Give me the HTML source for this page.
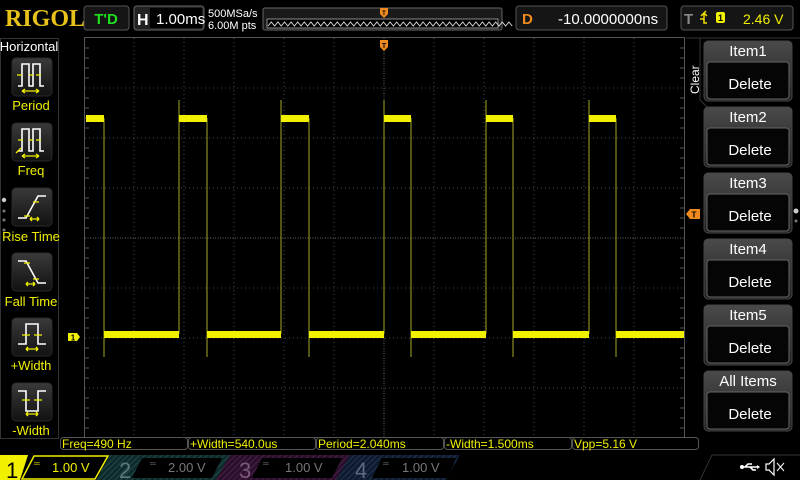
<!DOCTYPE html>
<html><head><meta charset="utf-8"><style>
html,body{margin:0;padding:0;background:#000;width:800px;height:480px;overflow:hidden}
svg{display:block}
text{font-family:"Liberation Sans",sans-serif}
text.serif{font-family:"Liberation Serif",serif}
</style></head><body>
<svg width="800" height="480" viewBox="0 0 800 480" xmlns="http://www.w3.org/2000/svg">
<defs>
<linearGradient id="btn" x1="0" y1="0" x2="0" y2="1"><stop offset="0" stop-color="#3a3a3a"/><stop offset="1" stop-color="#111"/></linearGradient>
<linearGradient id="hdr" x1="0" y1="0" x2="0" y2="1"><stop offset="0" stop-color="#4a4a4a"/><stop offset="1" stop-color="#222"/></linearGradient>
<pattern id="g2" width="4" height="4" patternUnits="userSpaceOnUse" patternTransform="rotate(45)"><rect width="4" height="4" fill="#0f2a2a"/><rect width="1" height="4" fill="#1f4a48"/></pattern>
<pattern id="g3" width="4" height="4" patternUnits="userSpaceOnUse" patternTransform="rotate(45)"><rect width="4" height="4" fill="#2a0f2a"/><rect width="1" height="4" fill="#4a1f4a"/></pattern>
<pattern id="g4" width="4" height="4" patternUnits="userSpaceOnUse" patternTransform="rotate(45)"><rect width="4" height="4" fill="#0f1a2e"/><rect width="1" height="4" fill="#1f3350"/></pattern>
</defs>
<!-- top bar -->
<text class="serif" x="5" y="26" font-weight="bold" font-size="24" fill="#e8c21a">RIGOL</text>
<rect x="84" y="6" width="45" height="24" rx="3" fill="#151515" stroke="#555"/>
<text x="106" y="24" text-anchor="middle" font-weight="bold" font-size="15" fill="#1ee01e">T'D</text>
<rect x="134" y="6" width="70" height="24" rx="3" fill="#222" stroke="#666"/>
<rect x="150" y="8" width="52" height="20" fill="#000"/>
<text x="137" y="25" font-weight="bold" font-size="16" fill="#fff">H</text>
<text x="156" y="24" font-size="15" fill="#fff">1.00ms</text>
<text x="208" y="17" font-size="11" fill="#fff">500MSa/s</text>
<text x="208" y="29" font-size="11" fill="#fff">6.00M pts</text>
<rect x="263" y="8" width="239" height="22" rx="2" fill="#1a1a1a" stroke="#666"/>
<rect x="267" y="19" width="231" height="9" fill="#000" stroke="#aaa" stroke-width="0.8"/>
<path d="M268 26 l3.3 -4 l3.3 4 l3.3 -4 l3.3 4 l3.3 -4 l3.3 4 l3.3 -4 l3.3 4 l3.3 -4 l3.3 4 l3.3 -4 l3.3 4 l3.3 -4 l3.3 4 l3.3 -4 l3.3 4 l3.3 -4 l3.3 4 l3.3 -4 l3.3 4 l3.3 -4 l3.3 4 l3.3 -4 l3.3 4 l3.3 -4 l3.3 4 l3.3 -4 l3.3 4 l3.3 -4 l3.3 4 l3.3 -4 l3.3 4 l3.3 -4 l3.3 4 l3.3 -4 l3.3 4 l3.3 -4 l3.3 4 l3.3 -4 l3.3 4 l3.3 -4 l3.3 4 l3.3 -4 l3.3 4 l3.3 -4 l3.3 4 l3.3 -4 l3.3 4 l3.3 -4 l3.3 4 l3.3 -4 l3.3 4 l3.3 -4 l3.3 4 l3.3 -4 l3.3 4 l3.3 -4 l3.3 4 l3.3 -4 l3.3 4 l3.3 -4 l3.3 4 l3.3 -4 l3.3 4 l3.3 -4 l3.3 4 l3.3 -4 l3.3 4 l3.3 -4 l3.3 4 l3.3 -4 l3.3 4 l3.3 -4 l3.3 4" fill="none" stroke="#ddd" stroke-width="0.9"/>
<path d="M380 8 h8 v6 l-4 4 l-4 -4z" fill="#f08a1e"/>
<text x="384" y="15" text-anchor="middle" font-size="6" fill="#000" font-weight="bold">T</text>
<rect x="516" y="6" width="151" height="24" rx="3" fill="#151515" stroke="#555"/>
<text x="522" y="24" font-weight="bold" font-size="15" fill="#f08a1e">D</text>
<text x="558" y="24" font-size="15" fill="#fff">-10.0000000ns</text>
<rect x="681" y="6" width="112" height="24" rx="3" fill="#151515" stroke="#555"/>
<text x="684" y="24" font-weight="bold" font-size="15" fill="#888">T</text>
<path d="M700 19 h4 v-6 l2 -2 M704 13 l-3 3 M704 13 l3 3 M704 19 v4 h3" fill="none" stroke="#f0e000" stroke-width="1.5"/>
<rect x="716" y="12" width="9" height="11" rx="2" fill="#f0f000"/>
<text x="720.5" y="21" text-anchor="middle" font-size="9" font-weight="bold" fill="#000">1</text>
<text x="743" y="24" font-size="14" fill="#f0f000">2.46 V</text>
<!-- left panel -->
<rect x="0.5" y="38.5" width="58" height="400" fill="none" stroke="#333"/>
<text x="29" y="51" text-anchor="middle" font-size="13" fill="#fff">Horizontal</text>
<g font-size="13" fill="#f0f000" text-anchor="middle">
<g transform="translate(12,58)"><rect width="40" height="38" rx="4" fill="url(#btn)" stroke="#2a2a2a"/>
<path d="M6 28 h4 v-22 h7 v22 h4 v-22 h7 v22 h4" fill="none" stroke="#fff" stroke-width="1.6"/>
<path d="M5 17 h5 M17 17 h4 M24 17 h5 M10 33 h17 M10 33 l3 -2 M10 33 l3 2 M27 33 l-3 -2 M27 33 l-3 2" stroke="#f0f000" stroke-width="1.3" fill="none"/></g>
<text x="31" y="110">Period</text>
<g transform="translate(12,123)"><rect width="40" height="38" rx="4" fill="url(#btn)" stroke="#2a2a2a"/>
<path d="M6 28 h4 v-22 h7 v22 h4 v-22 h7 v22 h4" fill="none" stroke="#fff" stroke-width="1.6"/>
<path d="M6 17 h5 M17 17 h4 M24 17 h5 M10 33 h17 M10 33 l3 -2 M10 33 l3 2 M27 33 l-3 -2 M27 33 l-3 2 M4 30 l5 -5" stroke="#f0f000" stroke-width="1.3" fill="none"/></g>
<text x="31" y="175">Freq</text>
<g transform="translate(12,188)"><rect width="40" height="38" rx="4" fill="url(#btn)" stroke="#2a2a2a"/>
<path d="M6 30 h8 l12 -22 h8" fill="none" stroke="#fff" stroke-width="1.6"/>
<path d="M12 28 h6 M21 14 h6 M18 31 h9 M18 31 l2 -2 M18 31 l2 2 M27 31 l-2 -2 M27 31 l-2 2" stroke="#f0f000" stroke-width="1.3" fill="none"/></g>
<text x="31" y="241">Rise Time</text>
<g transform="translate(12,253)"><rect width="40" height="38" rx="4" fill="url(#btn)" stroke="#2a2a2a"/>
<path d="M6 8 h8 l12 22 h8" fill="none" stroke="#fff" stroke-width="1.6"/>
<path d="M12 10 h6 M21 26 h6 M14 31 h9 M14 31 l2 -2 M14 31 l2 2 M23 31 l-2 -2 M23 31 l-2 2" stroke="#f0f000" stroke-width="1.3" fill="none"/></g>
<text x="31" y="306">Fall Time</text>
<g transform="translate(12,318)"><rect width="40" height="38" rx="4" fill="url(#btn)" stroke="#2a2a2a"/>
<path d="M6 26 h8 v-20 h12 v20 h8" fill="none" stroke="#fff" stroke-width="1.6"/>
<path d="M10 17 h8 M22 17 h8 M14 31 h12 M14 31 l2 -2 M14 31 l2 2 M26 31 l-2 -2 M26 31 l-2 2" stroke="#f0f000" stroke-width="1.3" fill="none"/></g>
<text x="31" y="370">+Width</text>
<g transform="translate(12,383)"><rect width="40" height="38" rx="4" fill="url(#btn)" stroke="#2a2a2a"/>
<path d="M6 8 h8 v20 h12 v-20 h8" fill="none" stroke="#fff" stroke-width="1.6"/>
<path d="M10 17 h8 M22 17 h8 M14 31 h12 M14 31 l2 -2 M14 31 l2 2 M26 31 l-2 -2 M26 31 l-2 2" stroke="#f0f000" stroke-width="1.3" fill="none"/></g>
<text x="31" y="435">-Width</text>
</g>
<circle cx="4" cy="200" r="2.2" fill="#ccc"/><circle cx="4" cy="211" r="1.5" fill="#777"/><circle cx="4" cy="220" r="1.5" fill="#777"/><circle cx="4" cy="230" r="1.5" fill="#777"/>
<!-- grid -->
<rect x="84.5" y="37.5" width="600" height="400" fill="none" stroke="#555"/>
<g stroke="#4a4a4a" stroke-dasharray="1 3">
<path d="M134 38V437M184 38V437M234 38V437M284 38V437M334 38V437M434 38V437M484 38V437M534 38V437M584 38V437M634 38V437"/>
<path d="M85 88H684M85 138H684M85 188H684M85 288H684M85 338H684M85 388H684"/>
</g>
<g stroke="#666" stroke-dasharray="1 1.5"><path d="M384 38V437M85 238H684"/></g>
<g stroke="#555">
<path d="M85 48h4M85 58h4M85 68h4M85 78h4M85 98h4M85 108h4M85 118h4M85 128h4M85 148h4M85 158h4M85 168h4M85 178h4M85 198h4M85 208h4M85 218h4M85 228h4M85 248h4M85 258h4M85 268h4M85 278h4M85 298h4M85 308h4M85 318h4M85 328h4M85 348h4M85 358h4M85 368h4M85 378h4M85 398h4M85 408h4M85 418h4M85 428h4"/>
<path d="M684 48h-4M684 58h-4M684 68h-4M684 78h-4M684 98h-4M684 108h-4M684 118h-4M684 128h-4M684 148h-4M684 158h-4M684 168h-4M684 178h-4M684 198h-4M684 208h-4M684 218h-4M684 228h-4M684 248h-4M684 258h-4M684 268h-4M684 278h-4M684 298h-4M684 308h-4M684 318h-4M684 328h-4M684 348h-4M684 358h-4M684 368h-4M684 378h-4M684 398h-4M684 408h-4M684 418h-4M684 428h-4"/>
</g>
<!-- markers -->
<path d="M380 40 h8 v7 l-4 4 l-4 -4z" fill="#f08a1e"/>
<text x="384" y="48" text-anchor="middle" font-size="7" fill="#000" font-weight="bold">T</text>
<path d="M68 333 h9 l3 4 l-3 4 h-9z" fill="#f0f000"/>
<text x="73" y="340.5" text-anchor="middle" font-size="8" font-weight="bold" fill="#000">1</text>
<path d="M700 209 h-10 l-4 5 l4 5 h10z" fill="#f08a1e"/>
<text x="694" y="217.5" text-anchor="middle" font-size="8" font-weight="bold" fill="#000">T</text>
<!-- waveform edges -->
<g stroke="#8a8a20" stroke-width="1.2">
<path d="M104 118V357M207 118V357M309 118V357M411 118V357M513 118V357M616 118V357"/>
<path d="M179 100V334M281 100V334M384 100V334M486 100V334M589 100V334"/>
</g>
<g fill="#f0f000">
<rect x="86" y="115" width="18" height="7"/><rect x="179" y="115" width="28" height="7"/><rect x="281" y="115" width="28" height="7"/><rect x="384" y="115" width="27" height="7"/><rect x="486" y="115" width="27" height="7"/><rect x="589" y="115" width="27" height="7"/>
<rect x="104" y="331" width="75" height="7"/><rect x="207" y="331" width="74" height="7"/><rect x="309" y="331" width="75" height="7"/><rect x="411" y="331" width="75" height="7"/><rect x="513" y="331" width="76" height="7"/><rect x="616" y="331" width="68" height="7"/>
</g>
<!-- right panel -->
<path d="M686 38 H800 M700 38 V100 l12 12" fill="none" stroke="#333"/>
<text transform="translate(699,94) rotate(-90)" font-size="12" fill="#fff">Clear</text>
<g font-size="15" fill="#fff" text-anchor="middle">
<g transform="translate(704,41)"><rect width="88" height="60" rx="4" fill="url(#hdr)" stroke="#444"/><rect x="3" y="21" width="82" height="37" rx="3" fill="#050505" stroke="#666"/><text x="44" y="15">Item1</text><text x="46" y="48">Delete</text></g>
<g transform="translate(704,107)"><rect width="88" height="60" rx="4" fill="url(#hdr)" stroke="#444"/><rect x="3" y="21" width="82" height="37" rx="3" fill="#050505" stroke="#666"/><text x="44" y="15">Item2</text><text x="46" y="48">Delete</text></g>
<g transform="translate(704,173)"><rect width="88" height="60" rx="4" fill="url(#hdr)" stroke="#444"/><rect x="3" y="21" width="82" height="37" rx="3" fill="#050505" stroke="#666"/><text x="44" y="15">Item3</text><text x="46" y="48">Delete</text></g>
<g transform="translate(704,239)"><rect width="88" height="60" rx="4" fill="url(#hdr)" stroke="#444"/><rect x="3" y="21" width="82" height="37" rx="3" fill="#050505" stroke="#666"/><text x="44" y="15">Item4</text><text x="46" y="48">Delete</text></g>
<g transform="translate(704,305)"><rect width="88" height="60" rx="4" fill="url(#hdr)" stroke="#444"/><rect x="3" y="21" width="82" height="37" rx="3" fill="#050505" stroke="#666"/><text x="44" y="15">Item5</text><text x="46" y="48">Delete</text></g>
<g transform="translate(704,371)"><rect width="88" height="60" rx="4" fill="url(#hdr)" stroke="#444"/><rect x="3" y="21" width="82" height="37" rx="3" fill="#050505" stroke="#666"/><text x="44" y="15">All Items</text><text x="46" y="48">Delete</text></g>
</g>
<circle cx="796" cy="211" r="2.5" fill="#ccc"/><circle cx="796" cy="221" r="1.5" fill="#777"/>
<!-- measurements -->
<g font-size="12" fill="#f0f000">
<rect x="60.5" y="437.5" width="127" height="12" rx="3" fill="#000" stroke="#555"/><text x="62" y="448">Freq=490 Hz</text>
<rect x="188.5" y="437.5" width="127" height="12" rx="3" fill="#000" stroke="#555"/><text x="190" y="448">+Width=540.0us</text>
<rect x="316.5" y="437.5" width="127" height="12" rx="3" fill="#000" stroke="#555"/><text x="318" y="448">Period=2.040ms</text>
<rect x="444.5" y="437.5" width="127" height="12" rx="3" fill="#000" stroke="#555"/><text x="446" y="448">-Width=1.500ms</text>
<rect x="572.5" y="437.5" width="126" height="12" rx="3" fill="#000" stroke="#555"/><text x="574" y="448">Vpp=5.16 V</text>
</g>
<!-- bottom channel bar -->
<rect x="0" y="455" width="800" height="25" fill="#000"/>
<path d="M0 455 H28 L20 480 H0Z" fill="#f0f000"/>
<text x="6" y="478" font-size="22" fill="#000">1</text>
<path d="M34 456 H108 L95 479 H22Z" fill="#000" stroke="#f0f000" stroke-width="1.5"/>
<path d="M110 455 H230 L216 480 H96Z" fill="url(#g2)"/>
<path d="M142 458 H222 L212 478 H132Z" fill="#000"/>
<path d="M230 455 H350 L336 480 H216Z" fill="url(#g3)"/>
<path d="M262 458 H342 L332 478 H252Z" fill="#000"/>
<path d="M350 455 H460 L446 480 H336Z" fill="url(#g4)"/>
<path d="M382 458 H456 L448 478 H372Z" fill="#000"/>
<g font-size="13">
<text x="34" y="466" font-size="8" fill="#f0f000">═</text><text x="52" y="472" fill="#f0f000">1.00 V</text>
<text x="119" y="478" font-size="22" fill="#5a7a78">2</text><text x="150" y="466" font-size="8" fill="#777">═</text><text x="168" y="472" fill="#777">2.00 V</text>
<text x="239" y="478" font-size="22" fill="#7a5a7a">3</text><text x="263" y="466" font-size="8" fill="#777">═</text><text x="285" y="472" fill="#777">1.00 V</text>
<text x="355" y="478" font-size="22" fill="#5a6a80">4</text><text x="383" y="466" font-size="8" fill="#777">═</text><text x="402" y="472" fill="#777">1.00 V</text>
</g>
<path d="M700 480 L712 455 H800" fill="none" stroke="#333"/>
<path d="M742 467 h16 M745 467 l3 -3 h4 M750 467 l3 3 h3" stroke="#fff" stroke-width="1.6" fill="none"/>
<circle cx="742" cy="467" r="2" fill="#fff"/><path d="M757 465 l3 2 l-3 2z" fill="#fff"/>
<path d="M766 464 h3 l5 -5 v16 l-5 -5 h-3z" fill="none" stroke="#fff" stroke-width="1.2"/>
<path d="M777 463 l7 8 M784 463 l-7 8" stroke="#fff" stroke-width="1"/>
</svg>
</body></html>
